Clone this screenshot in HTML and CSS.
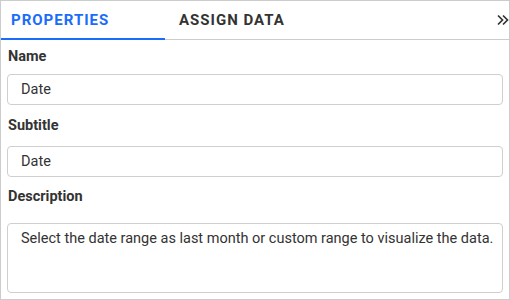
FILE: index.html
```html
<!DOCTYPE html>
<html lang="en">
<head>
    <meta charset="UTF-8">
    <title>Properties</title>
    <link rel="stylesheet" href="styles.css">
</head>
<body>
<div class="panel">
    <div class="tabs">
        <div class="tab active">Properties</div>
        <div class="tab">Assign Data</div>
        <button class="collapse" aria-label="Collapse">
            <svg width="12" height="12" viewBox="0 0 12 12"><path d="M1 1.5 L5.5 6 L1 10.5 M6 1.5 L10.5 6 L6 10.5" fill="none" stroke="#333" stroke-width="1.7"/></svg>
        </button>
    </div>
    <div class="form">
        <label class="field-label name-label">Name</label>
        <input class="field name-field" type="text" value="Date">
        <label class="field-label sub-label">Subtitle</label>
        <input class="field sub-field" type="text" value="Date">
        <label class="field-label desc-label">Description</label>
        <textarea class="field area">Select the date range as last month or custom range to visualize the data.</textarea>
    </div>
</div>
</body>
</html>
```

FILE: styles.css
```css
* {
    margin: 0;
    padding: 0;
    box-sizing: border-box;
    font-family: Roboto, "Liberation Sans", sans-serif;
}
body {
    background: #fff;
}
.panel {
    width: 510px;
    height: 300px;
    border: 1px solid #cccccc;
    display: flex;
    flex-direction: column;
}
.tabs {
    height: 39px;
    display: flex;
    align-items: stretch;
    border-bottom: 1px solid #cccccc;
}
.tab {
    font-size: 15px;
    font-weight: 700;
    text-transform: uppercase;
    letter-spacing: 1px;
    color: #333;
    display: flex;
    align-items: center;
    padding: 0 10px;
    width: 164px;
}
.tab.active {
    color: #1a6cfa;
    border-bottom: 2px solid #1a6cfa;
    margin-bottom: -1px;
    padding-top: 1px;
}
.tab + .tab {
    padding-left: 14px;
}
.collapse {
    margin-left: auto;
    border: 0;
    background: none;
    width: 20px;
    display: flex;
    align-items: center;
    justify-content: flex-end;
    padding-bottom: 1px;
}
.form {
    display: flex;
    flex-direction: column;
    padding: 8px 6px 0 6px;
}
.field-label {
    font-size: 14.5px;
    font-weight: 700;
    color: #333;
    padding-left: 1px;
    line-height: 18px;
}
.field {
    height: 31px;
    border: 1px solid #cfcfcf;
    border-radius: 4px;
    padding: 0 13px;
    font-size: 14.5px;
    color: #333;
    outline: 0;
}
.name-label {
    margin-bottom: 8px;
}
.name-field {
    margin-bottom: 12px;
}
.sub-label {
    margin-bottom: 11px;
}
.sub-field {
    margin-bottom: 11px;
}
.desc-label {
    margin-bottom: 17px;
}
.area {
    height: 70px;
    resize: none;
    overflow: hidden;
    padding: 6px 4px 5px 13px;
    line-height: 18px;
}
```
